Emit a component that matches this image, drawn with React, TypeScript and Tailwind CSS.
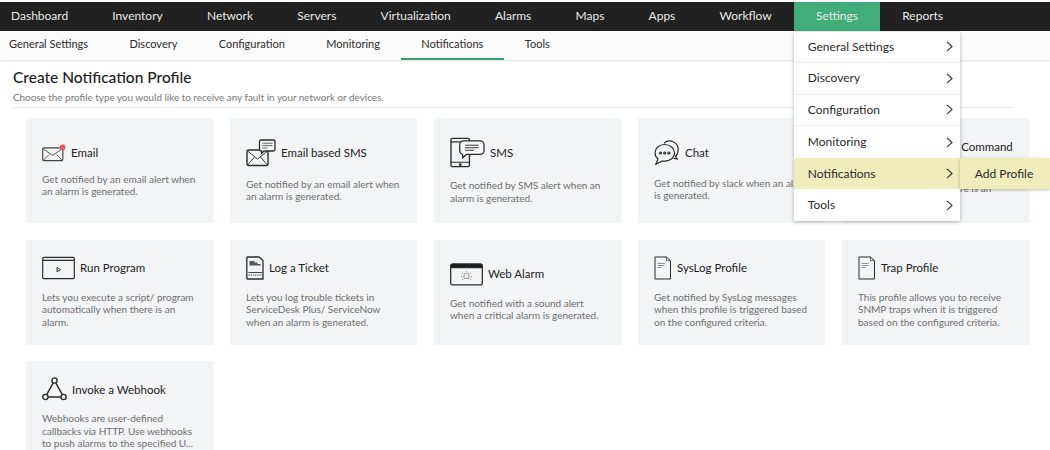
import type { ReactNode } from 'react';

const topNav = ['Dashboard', 'Inventory', 'Network', 'Servers', 'Virtualization', 'Alarms', 'Maps', 'Apps', 'Workflow', 'Settings', 'Reports'];
const subNav = ['General Settings', 'Discovery', 'Configuration', 'Monitoring', 'Notifications', 'Tools'];
const menu = ['General Settings', 'Discovery', 'Configuration', 'Monitoring', 'Notifications', 'Tools'];

const stroke = { fill: 'none', stroke: '#2b2b2b', strokeWidth: 1.2 };

const EmailIcon = () => (
    <svg width="24" height="18" viewBox="0 0 25 18" {...stroke}>
        <rect x="0.7" y="3.6" width="21" height="13.4" rx="1.5" stroke="#444" />
        <path d="M1 4.5 11 11.5 21.5 4.5M1.5 16.5l6-6M21 16.5l-6-6" stroke="#444" strokeWidth="0.9" />
        <circle cx="21.5" cy="3.2" r="3" fill="#e8575a" stroke="none" />
    </svg>
);

const EmailSmsIcon = () => (
    <svg width="30" height="28" viewBox="0 0 30 28" {...stroke}>
        <rect x="1" y="11" width="21" height="15.5" rx="1.5" strokeWidth="1.4" />
        <path d="M1.5 12 11.5 20 21.5 12M1.5 26l7-8M21.5 26l-7-8" strokeWidth="0.9" />
        <path d="M15 1h12.5a1.5 1.5 0 0 1 1.5 1.5v8a1.5 1.5 0 0 1-1.5 1.5H18l-2.5 2.5V12H15a1.5 1.5 0 0 1-1.5-1.5v-8A1.5 1.5 0 0 1 15 1z" fill="#f3f4f6" strokeWidth="1.3" />
        <path d="M16.5 4.2h10M16.5 6.6h10M16.5 9h5" strokeWidth="1" stroke="#666" />
    </svg>
);

const SmsIcon = () => (
    <svg width="35" height="31" viewBox="0 0 36 31" {...stroke}>
        <rect x="1" y="1" width="19" height="29" rx="1.5" strokeWidth="1.4" />
        <path d="M1 4.5h19M1 25.5h19" />
        <circle cx="10.5" cy="28" r="0.8" fill="#2b2b2b" />
        <path d="M14 3.5h17a4 4 0 0 1 4 4v6a4 4 0 0 1-4 4H17l-4 3.5v-3.7a4 4 0 0 1-3-3.8v-6a4 4 0 0 1 4-4z" fill="#f8f8f8" strokeWidth="1.3" />
        <path d="M15.5 8h14M15.5 10.6h14M15.5 13.2h9" strokeWidth="1" />
    </svg>
);

const ChatIcon = () => (
    <svg width="26" height="26" viewBox="0 0 26 26" {...stroke}>
        <path d="M10 3.2A8.5 8.5 0 0 1 24.2 9.5c0 3-1 5.2-2.6 7l1.6 2.5-3.5-.7" />
        <path d="M10.5 4.5C5 4.5 1 8.3 1 13c0 2.6 1.2 4.6 3 6l-2.2 5.2L8.5 21c6.6 1.2 12-3 12-8 0-4.7-4.2-8.5-10-8.5z" fill="#f3f4f6" />
        <circle cx="6.5" cy="13" r="1" />
        <circle cx="10.7" cy="13" r="1" />
        <circle cx="14.9" cy="13" r="1" />
    </svg>
);

const TerminalIcon = () => (
    <svg width="55" height="24" viewBox="0 0 55 24" {...stroke}>
        <rect x="1" y="1" width="44" height="22" rx="1.5" />
        <path d="M8 8l4 4-4 4M15 16h8" />
    </svg>
);

const RunIcon = () => (
    <svg width="33" height="24" viewBox="0 0 34 24" {...stroke}>
        <rect x="0.7" y="1" width="32.6" height="22" rx="1.2" />
        <path d="M0.7 4.2h32.6" />
        <path d="M15.5 11.5v4.5l3.5-2.2z" strokeWidth="1" />
    </svg>
);

const TicketIcon = () => (
    <svg width="18" height="24" viewBox="0 0 18 24" {...stroke}>
        <path d="M1.5 1h11.5L17 4.5v18.5H1.5a0.7.7 0 0 1-.7-.7V1.7A.7.7 0 0 1 1.5 1z" strokeWidth="1.3" />
        <path d="M3.5 5h5v1.4h3v1.6h3v1.6h-11z" fill="#555" stroke="none" />
        <path d="M2.5 16.5h13.5" strokeWidth="0.9" />
        <path d="M2.5 19h13.5" strokeWidth="1.1" strokeDasharray="1.2 1" />
    </svg>
);

const WebAlarmIcon = () => (
    <svg width="33" height="23" viewBox="0 0 34 23" {...stroke}>
        <rect x="0.7" y="0.7" width="32.6" height="21.6" rx="2" strokeWidth="1.3" />
        <path d="M0.7 2.5a2 2 0 0 1 2-1.8h28.6a2 2 0 0 1 2 1.8V4.5H0.7z" fill="#1c1c1c" />
        <path d="M14.5 15.5v-3a2.5 2.5 0 0 1 5 0v3zM12.5 10l1 .8M21.5 10l-1 .8M11.5 13.5h1.3M22.5 13.5h-1.3M12.5 17l1-.8M21.5 17l-1-.8M17 7.8v.9" strokeWidth="0.7" stroke="#666" />
    </svg>
);

const DocIcon = () => (
    <svg width="18" height="24" viewBox="0 0 18 24" {...stroke}>
        <path d="M1 1h11.5L16.5 4.7V23H1z" strokeWidth="1" />
        <path d="M12.5 1v3.7h4" strokeWidth="0.7" />
        <path d="M3.5 7.5h7M3.5 9.5h7M3.5 11.5h4" strokeWidth="0.9" stroke="#888" />
    </svg>
);

const WebhookIcon = () => (
    <svg width="25" height="24" viewBox="0 0 25 24" {...stroke} strokeWidth="1.4">
        <circle cx="12.5" cy="3.5" r="2.6" />
        <circle cx="3.4" cy="20" r="2.6" />
        <circle cx="21.6" cy="20" r="2.6" />
        <path d="M11.2 5.8 4.7 17.7M13.8 5.8l6.5 11.9M6 20h13" />
    </svg>
);

type Profile = { title: string; icon: ReactNode; desc: string };

const profiles: Profile[] = [
    { title: 'Email', icon: <EmailIcon />, desc: 'Get notified by an email alert when an alarm is generated.' },
    { title: 'Email based SMS', icon: <EmailSmsIcon />, desc: 'Get notified by an email alert when an alarm is generated.' },
    { title: 'SMS', icon: <SmsIcon />, desc: 'Get notified by SMS alert when an alarm is generated.' },
    { title: 'Chat', icon: <ChatIcon />, desc: 'Get notified by slack when an alarm is generated.' },
    { title: 'Execute Command', icon: <TerminalIcon />, desc: 'Lets you execute a command automatically when there is an alarm.' },
    { title: 'Run Program', icon: <RunIcon />, desc: 'Lets you execute a script/ program automatically when there is an alarm.' },
    { title: 'Log a Ticket', icon: <TicketIcon />, desc: 'Lets you log trouble tickets in ServiceDesk Plus/ ServiceNow when an alarm is generated.' },
    { title: 'Web Alarm', icon: <WebAlarmIcon />, desc: 'Get notified with a sound alert when a critical alarm is generated.' },
    { title: 'SysLog Profile', icon: <DocIcon />, desc: 'Get notified by SysLog messages when this profile is triggered based on the configured criteria.' },
    { title: 'Trap Profile', icon: <DocIcon />, desc: 'This profile allows you to receive SNMP traps when it is triggered based on the configured criteria.' },
    { title: 'Invoke a Webhook', icon: <WebhookIcon />, desc: 'Webhooks are user-defined callbacks via HTTP. Use webhooks to push alarms to the specified U...' },
];

const Chevron = () => (
    <svg width="7" height="11" viewBox="0 0 7 11" fill="none" stroke="#333" strokeWidth="1.1">
        <path d="M1 .8l5 4.7-5 4.7" />
    </svg>
);

const SettingsMenu = () => (
    <div className="absolute left-0 top-[29.5px] z-10 w-[166px] bg-white shadow-[0_1px_4px_rgba(0,0,0,0.3)]">
        {menu.map((item, i) => (
            <div
                key={item}
                className={`relative flex h-[31.6px] items-center justify-between pl-[14px] pr-[7px] text-[12px] text-[#2b2b2b] ${item === 'Notifications' ? 'bg-[#efedbb]' : ''} ${i < 3 ? 'border-b border-[#eeeeee]' : ''}`}
            >
                <span>{item}</span>
                <Chevron />
                {item === 'Notifications' && (
                    <div className="absolute left-full top-0 flex h-[31.6px] w-[90px] items-center bg-[#efedbb] pl-[15px] text-[12px] shadow-[0_1px_3px_rgba(0,0,0,0.25)]">
                        Add Profile
                    </div>
                )}
            </div>
        ))}
    </div>
);

export default function App() {
    return (
        <div className="h-[450px] w-[1050px] overflow-hidden bg-white pt-[2px] font-['Lato','Liberation_Sans',sans-serif]">
            <div className="flex h-[29px] items-stretch bg-[#212121] text-[12px] text-[#e8e8e8]">
                {topNav.map((item, i) => (
                    <div
                        key={item}
                        className={`relative flex items-center pb-[1px] ${i === 0 ? 'pl-[11px] pr-[22px]' : 'px-[22.1px]'} ${item === 'Settings' ? 'bg-[#41ad79]' : ''}`}
                    >
                        {item}
                        {item === 'Settings' && <SettingsMenu />}
                    </div>
                ))}
            </div>
            <div className="flex h-[29px] items-stretch bg-[#fbfbfb] text-[11px] text-[#2b2b2b] shadow-[0_1px_2px_rgba(0,0,0,0.12)]">
                {subNav.map((item, i) => (
                    <div
                        key={item}
                        className={`flex items-center pb-[1px] ${i === 0 ? 'pl-[9px] pr-[20.7px]' : 'px-[20.7px]'} ${item === 'Notifications' ? 'border-b-2 border-[#2f9e6a]' : 'border-b-2 border-transparent'}`}
                    >
                        {item}
                    </div>
                ))}
            </div>
            <div className="px-[13px] pt-[7px]">
                <h1 className="text-[15.5px] leading-5 font-medium text-[#1c1c1c]">Create Notification Profile</h1>
                <p className="mt-[2px] text-[9.9px] leading-4 text-[#777777]">
                    Choose the profile type you would like to receive any fault in your network or devices.
                </p>
                <div className="mt-[2px] h-px w-[999px] bg-[#e6e6e6]" />
            </div>
            <div className="mt-[10px] grid grid-cols-[repeat(5,187px)] gap-x-[17px] gap-y-[16.5px] pl-[26px]">
                {profiles.map(p => (
                    <div key={p.title} className="flex h-[105px] flex-col justify-center bg-[#f3f4f6] pl-[16px] pr-[12px]">
                        <div className="flex items-center gap-[5px] text-[11.5px] text-[#222222]">
                            {p.icon}
                            <span>{p.title}</span>
                        </div>
                        <p className="mt-[11px] text-[10px] leading-[12.5px] text-[#6e6e6e]">{p.desc}</p>
                    </div>
                ))}
            </div>
        </div>
    );
}
